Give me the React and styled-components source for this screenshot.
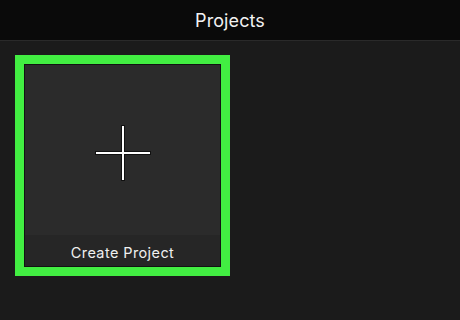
import styled, { createGlobalStyle } from "styled-components";

const GlobalStyle = createGlobalStyle`
  html, body {
    margin: 0;
    padding: 0;
    background: #1b1b1b;
    font-family: "Inter", "Liberation Sans", sans-serif;
  }
`;

const Screen = styled.div`
  width: 460px;
  height: 320px;
  display: flex;
  flex-direction: column;
  background: #1b1b1b;
  overflow: hidden;
`;

const Header = styled.div`
  height: 40px;
  flex-shrink: 0;
  display: flex;
  align-items: center;
  justify-content: center;
  background: #0a0a0a;
  border-bottom: 1px solid #2a2a2a;
  color: #f2f2f2;
  font-size: 18px;
  font-weight: 400;
  letter-spacing: 0.1px;
`;

const Grid = styled.div`
  display: grid;
  grid-template-columns: 215px;
  padding: 14px 15px;
`;

const Highlight = styled.div`
  border: 9px solid #42ee42;
  height: 221px;
  box-sizing: border-box;
  background: #121212;
  padding: 1px;
`;

const Tile = styled.div`
  height: 100%;
  display: flex;
  flex-direction: column;
  background: #2b2b2b;
`;

const Thumb = styled.div`
  flex: 1;
  display: flex;
  align-items: center;
  justify-content: center;
  padding-top: 6px;
`;

const Label = styled.div`
  height: 31px;
  display: flex;
  align-items: center;
  justify-content: center;
  background: #262626;
  color: #f0f0f0;
  font-size: 14.5px;
  letter-spacing: 0.4px;
  padding-top: 4px;
  box-sizing: border-box;
`;

const PlusIcon = () => (
  <svg width="58" height="58" viewBox="0 0 58 58">
    <g stroke="#111" strokeWidth="4" strokeLinecap="butt">
      <line x1="29" y1="1" x2="29" y2="57" />
      <line x1="1" y1="29" x2="57" y2="29" />
    </g>
    <g stroke="#fff" strokeWidth="2">
      <line x1="29" y1="2" x2="29" y2="56" />
      <line x1="2" y1="29" x2="56" y2="29" />
    </g>
  </svg>
);

export default function App() {
  return (
    <>
      <GlobalStyle />
      <Screen>
        <Header>Projects</Header>
        <Grid>
          <Highlight>
            <Tile>
              <Thumb>
                <PlusIcon />
              </Thumb>
              <Label>Create Project</Label>
            </Tile>
          </Highlight>
        </Grid>
      </Screen>
    </>
  );
}
